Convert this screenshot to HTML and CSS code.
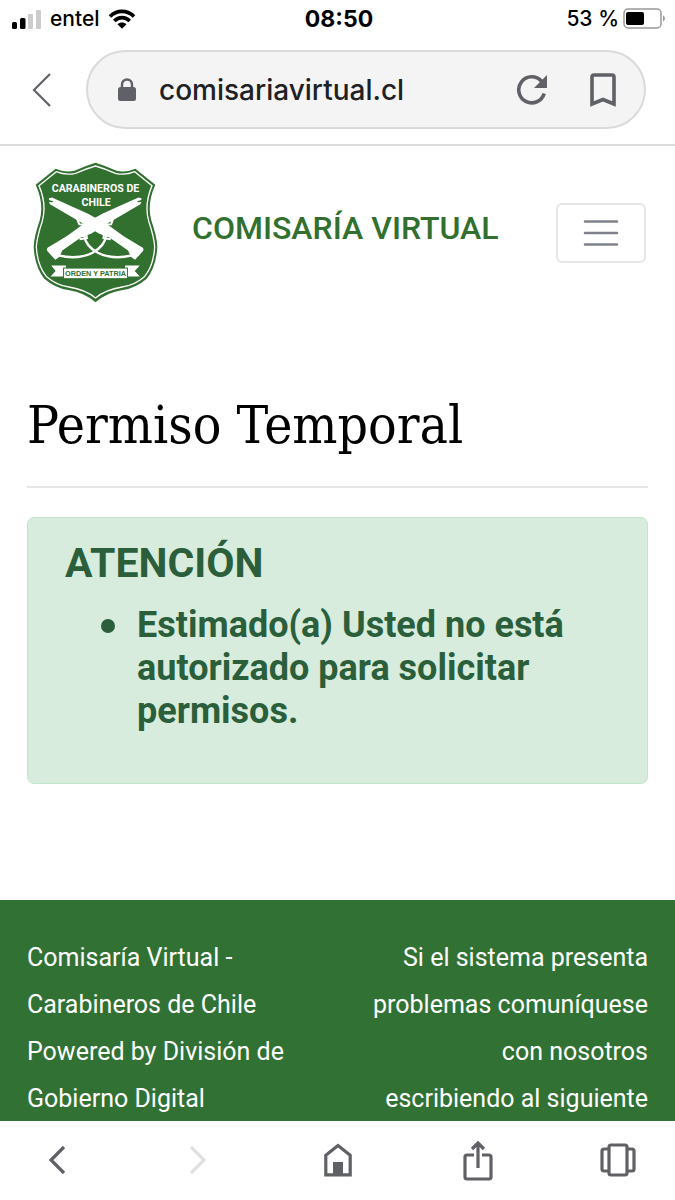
FILE: index.html
```html
<!DOCTYPE html>
<html lang="es">
<head>
    <meta charset="UTF-8">
    <meta name="viewport" content="width=device-width, initial-scale=1">
    <title>Comisaría Virtual</title>
    <link rel="stylesheet" href="styles.css">
</head>
<body>
<div class="status">
    <div class="status-left">
        <svg width="30" height="20" viewBox="0 0 30 20">
            <rect x="0" y="13" width="5" height="7" rx="1.500"/>
            <rect x="8" y="9" width="5.500" height="11" rx="1.500"/>
            <rect x="16" y="5" width="5" height="15" rx="1" fill="#ccc"/>
            <rect x="24" y="1" width="5" height="19" rx="1" fill="#ccc"/>
        </svg>
        <span class="carrier">entel</span>
        <svg width="28" height="20" viewBox="0 0 28 20">
            <path d="M2 7.500C8.500 0.600 19.500 0.600 26 7.500M6.300 12C10.500 7.500 17.500 7.500 21.700 12" fill="none" stroke="#000" stroke-width="3.600"/>
            <path d="M9.500 15.300C12 12.800 16 12.800 18.500 15.300L14 19.800Z"/>
        </svg>
    </div>
    <div class="clock">08:50</div>
    <div class="status-right">
        <span>53 %</span>
        <svg width="43" height="22" viewBox="0 0 43 22">
            <rect x="1" y="1" width="37" height="19" rx="4" fill="none" stroke="#999" stroke-width="1.500"/>
            <rect x="3" y="4" width="18" height="13" rx="2"/>
            <path d="M40 7.500C42.500 8.500 42.500 12.500 40 13.500Z" fill="#999"/>
        </svg>
    </div>
</div>

<div class="toolbar">
    <button class="icon-btn" aria-label="Volver">
        <svg width="20" height="36" viewBox="0 0 20 36"><path d="M18 2L2 18L18 34" fill="none" stroke="#5f6368" stroke-width="2.200"/></svg>
    </button>
    <div class="address">
        <svg width="20" height="24" viewBox="0 0 20 24">
            <rect x="1" y="9" width="18" height="14" rx="2.500" fill="#5f6068"/>
            <path d="M5 10V6.500a5 5 0 0 1 10 0V10" fill="none" stroke="#5f6068" stroke-width="2.400"/>
        </svg>
        <input type="text" value="comisariavirtual.cl" aria-label="Dirección">
        <button class="icon-btn" aria-label="Recargar">
            <svg width="32" height="32" viewBox="0 0 32 32">
                <path d="M28.200 19.500A13 13 0 1 1 25.500 7.200" fill="none" stroke="#606166" stroke-width="3.600"/>
                <path d="M31 1V14H18Z" fill="#606166"/>
            </svg>
        </button>
        <button class="icon-btn" aria-label="Guardar">
            <svg width="26" height="34" viewBox="0 0 26 34"><path d="M2 31V4a2 2 0 0 1 2-2H22a2 2 0 0 1 2 2V31L13 26.500Z" fill="none" stroke="#606166" stroke-width="3.600"/></svg>
        </button>
    </div>
</div>

<main class="page">
    <header class="header">
        <a class="brand" href="#">
            <svg class="shield" viewBox="40 35 376 424">
                <path d="M228 37Q258 46 291 61Q318 68 348 55L408 103Q382 160 396 211Q413 260 414 290Q411 350 382 386Q350 414 310 420Q260 428 228 457Q196 428 146 420Q106 414 74 386Q45 350 42 290Q43 260 60 211Q74 160 48 103L108 55Q138 68 165 61Q198 46 228 37Z" fill="#31702f"/>
                <path d="M228 47Q256 55 288 69Q318 76 346 64L398 106Q374 162 388 213Q404 260 406 290Q403 346 376 379Q346 405 308 411Q258 419 228 444Q198 419 148 411Q110 405 80 379Q53 346 50 290Q52 260 68 213Q82 162 58 106L110 64Q138 76 168 69Q200 55 228 47Z" fill="none" stroke="#fff" stroke-width="4"/>
                <g class="shield-name" fill="#fff">
                    <text x="228" y="126" text-anchor="middle">CARABINEROS DE</text>
                    <text x="230" y="167" text-anchor="middle">CHILE</text>
                </g>
                <!-- rifles -->
                <g id="rifle" fill="#fff">
                    <path d="M88 144L97 142L204 190L263 222L293 244L313 258L364 289Q376 293 371 303L347 329L335 321L326 301L271 263L238 250L190 220L91 162L88 155L98 156L101 153L88 149Z"/>
                    <path d="M172 204L179 222L200 223M254 244L252 264L274 267" fill="none" stroke="#fff" stroke-width="6"/>
                    <path d="M194 256Q198 288 235 308Q280 330 337 316" fill="none" stroke="#fff" stroke-width="7"/>
                </g>
                <use href="#rifle" transform="matrix(-1 0 0 1 454 0)"/>
                <path d="M95 346H139V379H93L108 363ZM361 346H317V379H361L346 363Z" fill="#fff"/>
                <rect x="132" y="354" width="192" height="32" fill="#fff" stroke="#31702f" stroke-width="3"/>
                <text class="shield-motto" x="228" y="378" text-anchor="middle" fill="#31702f">ORDEN Y PATRIA</text>
            </svg>
            <span class="brand-name">COMISARÍA VIRTUAL</span>
        </a>
        <button class="menu" aria-label="Menú">
            <svg width="36" height="28" viewBox="0 0 36 28"><path d="M2 2.500H34M2 14H34M2 25.500H34" stroke="#7f828c" stroke-width="2.600" stroke-linecap="round"/></svg>
        </button>
    </header>

    <section class="content">
        <h1>Permiso Temporal</h1>
        <hr>
        <div class="alert">
            <h2>ATENCIÓN</h2>
            <ul>
                <li>Estimado(a) Usted no está autorizado para solicitar permisos.</li>
            </ul>
        </div>
    </section>

    <footer class="footer">
        <p>Comisaría Virtual - Carabineros de Chile<br>Powered by División de Gobierno Digital</p>
        <p class="right">Si el sistema presenta problemas comuníquese con nosotros escribiendo al siguiente</p>
    </footer>
</main>

<nav class="bottom">
    <button class="icon-btn" aria-label="Atrás">
        <svg width="36" height="40" viewBox="0 0 36 40"><path d="M25 6L12 19L25 32" fill="none" stroke="#606166" stroke-width="3.200"/></svg>
    </button>
    <button class="icon-btn" aria-label="Adelante" disabled>
        <svg width="36" height="40" viewBox="0 0 36 40"><path d="M12 6L25 19L12 32" fill="none" stroke="#e0e0e0" stroke-width="3.200"/></svg>
    </button>
    <button class="icon-btn" aria-label="Inicio">
        <svg width="36" height="40" viewBox="0 0 36 40">
            <path d="M5.800 33.800V14.200L18 4.500L30.200 14.200V33.800Z" fill="none" stroke="#606166" stroke-width="3.200"/>
            <rect x="13" y="21" width="10" height="13" fill="#606166"/>
        </svg>
    </button>
    <button class="icon-btn" aria-label="Compartir">
        <svg width="36" height="40" viewBox="0 0 36 40"><path d="M14 14H7a2 2 0 0 0-2 2V36a2 2 0 0 0 2 2H29a2 2 0 0 0 2-2V16a2 2 0 0 0-2-2H22M18 27V3M12 8L18 2L24 8" fill="none" stroke="#606166" stroke-width="3.200"/></svg>
    </button>
    <button class="icon-btn" aria-label="Pestañas">
        <svg width="36" height="40" viewBox="0 0 36 40"><path d="M11 4H25a2 2 0 0 1 2 2V32a2 2 0 0 1-2 2H11a2 2 0 0 1-2-2V6a2 2 0 0 1 2-2ZM9 8H4a2 2 0 0 0-2 2V28a2 2 0 0 0 2 2H9M27 8H32a2 2 0 0 1 2 2V28a2 2 0 0 1-2 2H27" fill="none" stroke="#606166" stroke-width="3.200"/></svg>
    </button>
</nav>
</body>
</html>
```
FILE: styles.css
```css
*{ margin:0; padding:0; box-sizing:border-box;}
body{
    display: flex;
    flex-direction: column;
    height: 100vh;
    overflow: hidden;
    background: #fff;
    font-family: Roboto, sans-serif;
}
svg{
    display: block;
    flex: none;
}
.icon-btn{
    border: 0;
    background: none;
}

/* barra de estado */
.status{
    display: grid;
    grid-template-columns: 1fr auto 1fr;
    align-items: center;
    height: 37px;
    padding: 0 9px 0 12px;
    font: 500 21px/24px Inter, sans-serif;
}
.status-left,
.status-right{
    display: flex;
    align-items: center;
    gap: 8px;
}
.status-right{
    justify-content: flex-end;
    gap: 4px;
}
.clock{
    font-size: 23px;
    font-weight: 700;
}

/* barra de direccion */
.toolbar{
    display: flex;
    align-items: center;
    gap: 34px;
    flex: none;
    height: 109px;
    padding: 0 29px 2px 32px;
    border-bottom: 2px solid #dcdcdc;
}
.address{
    display: flex;
    align-items: center;
    flex: 1;
    min-width: 0;
    height: 79px;
    padding: 0 28px 0 29px;
    border: 2px solid #dadadc;
    border-radius: 40px;
    background: #f4f4f4;
}
.address input{
    flex: 1;
    min-width: 0;
    margin-left: 22px;
    border: 0;
    background: none;
    color: #202124;
    font: 500 28px/36px Inter, sans-serif;
}
.address .icon-btn + .icon-btn{
    margin-left: 42px;
}

.page{
    flex: 1;
    min-height: 0;
    overflow: hidden;
}
.header{
    display: flex;
    align-items: center;
    justify-content: space-between;
    padding: 16px 29px 16px 33px;
}
.brand{
    display: flex;
    align-items: center;
    gap: 34px;
    color: #31702f;
    text-decoration: none;
}
.shield{
    width: 125px;
    height: 141px;
}
.shield-name{
    font: 700 32px Roboto, sans-serif;
}
.shield-motto{
    font: 700 22px "Liberation Sans", sans-serif;
}
.brand-name{
    padding-bottom: 10px;
    font-size: 32px;
    font-weight: 500;
    line-height: 40px;
}
.menu{
    display: flex;
    align-items: center;
    justify-content: center;
    width: 90px;
    height: 60px;
    border: 2px solid #e6e6e6;
    border-radius: 6px;
    background: #fff;
}

.content{
    padding: 76px 27px 116px;
}
h1{
    font: 400 53px/60px "Roboto Slab", "DejaVu Serif Condensed", "DejaVu Serif", serif;
}
hr{
    margin: 31px 0 29px;
    border: 0;
    border-top: 2px solid #e6e6e6;
}
.alert{
    padding: 20px 37px 50px;
    border: 1px solid #c3e6cb;
    border-radius: 7px;
    background: #d7ecdc;
    color: #2b5f3b;
}
.alert h2{
    margin-bottom: 16px;
    font-size: 41px;
    line-height: 50px;
}
.alert ul{
    padding-left: 36px;
    font-size: 36px;
    font-weight: 700;
    line-height: 43px;
    list-style: none;
}
.alert li{
    display: flex;
    gap: 22px;
}
.alert li::before{
    content: "";
    flex: none;
    width: 14px;
    height: 14px;
    margin-top: 15px;
    border-radius: 50%;
    background: #2b5f3b;
}

.footer{
    display: flex;
    justify-content: space-between;
    padding: 34px 27px;
    background: #317234;
    color: #fff;
    font-size: 25px;
    line-height: 47px;
}
.footer p{
    width: 45%;
}
.footer .right{
    text-align: right;
}

.bottom{
    display: flex;
    align-items: center;
    justify-content: space-between;
    flex: none;
    height: 79px;
    padding: 0 39px;
    background: #fff;
}
```
